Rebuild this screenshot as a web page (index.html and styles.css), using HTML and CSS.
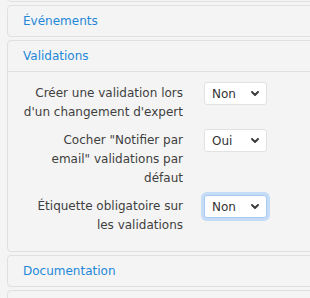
FILE: index.html
```html
<!DOCTYPE html>
<html lang="fr">
<head>
<meta charset="utf-8">
<title>Paramètres</title>
<link rel="stylesheet" href="styles.css">
</head>
<body>
<div class="page">
  <div class="panel panel-cut"></div>
  <div class="panel">
    <div class="panel-heading"><span class="panel-title">Événements</span></div>
  </div>
  <div class="panel">
    <div class="panel-heading with-line"><span class="panel-title">Validations</span></div>
    <div class="panel-body">
      <div class="form-row">
        <label class="control-label">Créer une validation lors d'un changement d'expert</label>
        <span class="select-wrap">
          <select class="form-select"><option>Non</option><option>Oui</option></select>
          <svg class="chev" width="8" height="5" viewBox="0 0 8 5"><path d="M1 1 L4 4 L7 1" fill="none" stroke="#3a3a3a" stroke-width="1.9" stroke-linecap="round" stroke-linejoin="round"/></svg>
        </span>
      </div>
      <div class="form-row">
        <label class="control-label">Cocher "Notifier par email" validations par défaut</label>
        <span class="select-wrap">
          <select class="form-select"><option>Oui</option><option>Non</option></select>
          <svg class="chev" width="8" height="5" viewBox="0 0 8 5"><path d="M1 1 L4 4 L7 1" fill="none" stroke="#3a3a3a" stroke-width="1.9" stroke-linecap="round" stroke-linejoin="round"/></svg>
        </span>
      </div>
      <div class="form-row">
        <label class="control-label">Étiquette obligatoire sur les validations</label>
        <span class="select-wrap">
          <select class="form-select is-focused"><option>Non</option><option>Oui</option></select>
          <svg class="chev" width="8" height="5" viewBox="0 0 8 5"><path d="M1 1 L4 4 L7 1" fill="none" stroke="#3a3a3a" stroke-width="1.9" stroke-linecap="round" stroke-linejoin="round"/></svg>
        </span>
      </div>
    </div>
  </div>
  <div class="panel">
    <div class="panel-heading"><span class="panel-title">Documentation</span></div>
  </div>
  <div class="panel">
    <div class="panel-heading"></div>
  </div>
</div>
</body>
</html>
```
FILE: styles.css
```css
html, body {
  margin: 0;
  padding: 0;
  background: #f4f4f4;
  overflow: hidden;
}
body {
  font-family: "DejaVu Sans", Verdana, sans-serif;
  font-size: 12px;
  color: #3f3f3f;
}
.page {
  padding-left: 7px;
  width: 420px;
}
.panel {
  background: #f4f4f4;
  border: 1px solid #e0e0e0;
  border-radius: 4px;
  margin-bottom: 3px;
}
.panel-cut {
  height: 30px;
  margin-top: -30px;
}
.panel-heading {
  padding: 8px 15px;
  line-height: 14px;
  height: 14px;
}
.panel-heading.with-line {
  border-bottom: 1px solid #e0e0e0;
}
.panel-title {
  color: #2388d8;
}
.panel-body {
  padding: 10px 0 16px 15px;
}
.form-row {
  display: grid;
  grid-template-columns: 160px 63px;
  column-gap: 21px;
  align-items: start;
  margin-bottom: 7px;
}
.form-row:last-child {
  margin-bottom: 0;
}
.control-label {
  text-align: right;
  line-height: 19px;
  padding-top: 2px;
  color: #3f3f3f;
}
.select-wrap {
  position: relative;
  display: block;
  width: 63px;
  height: 23px;
}
.form-select {
  -webkit-appearance: none;
  appearance: none;
  box-sizing: border-box;
  width: 63px;
  height: 23px;
  margin: 0;
  padding: 0 0 0 7px;
  border: 1px solid #e2e2e2;
  border-radius: 3px;
  background: #fff;
  font-family: "DejaVu Sans", Verdana, sans-serif;
  font-size: 12px;
  color: #333;
  outline: none;
}
.form-select.is-focused {
  border-color: #a9cbf1;
  box-shadow: 0 0 0 3px #c4dcf7;
}
.chev {
  position: absolute;
  right: 8px;
  top: 9px;
  pointer-events: none;
}
```
